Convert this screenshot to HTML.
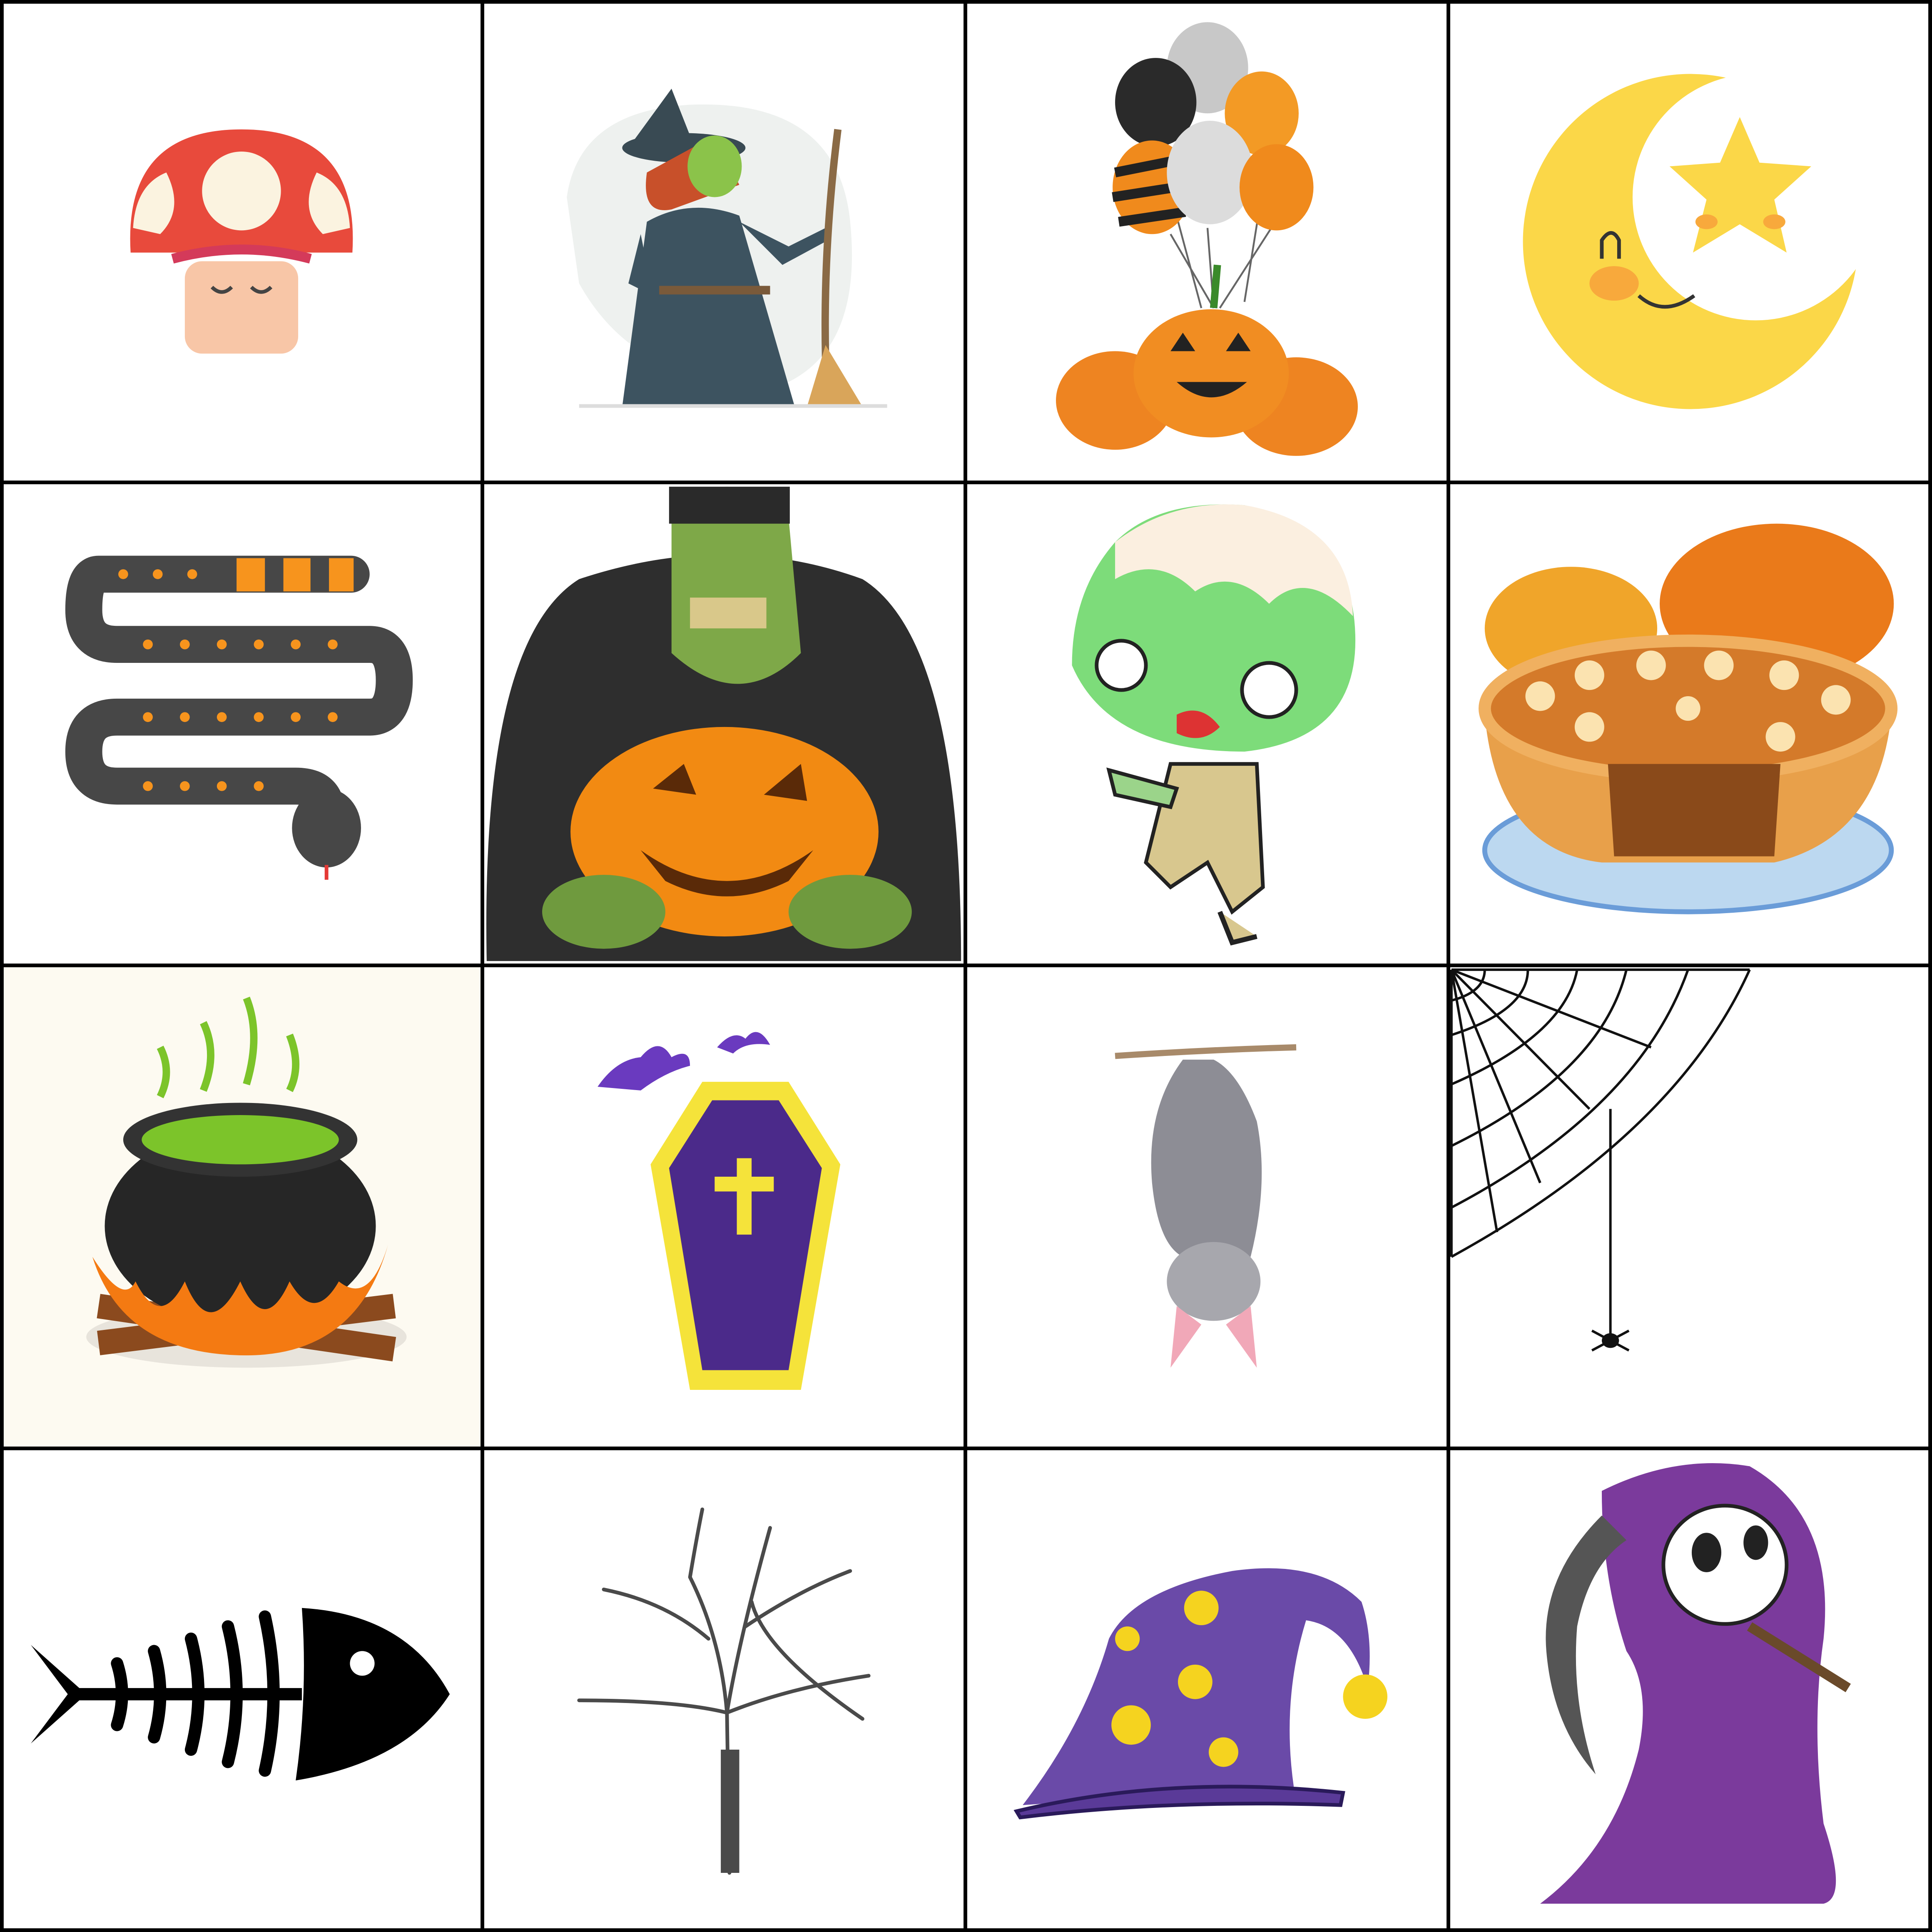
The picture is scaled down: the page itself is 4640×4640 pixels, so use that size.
<!DOCTYPE html>
<html><head><meta charset="utf-8"><style>
html,body{margin:0;padding:0;background:#fff}
svg{display:block;width:4640px;height:4640px}
</style></head><body>
<svg viewBox="0 0 1568 1568" xmlns="http://www.w3.org/2000/svg">
<rect width="1568" height="1568" fill="#fff"/>
<!-- cell 9 cream bg -->
<rect x="0" y="784" width="391" height="391" fill="#fdfaf1"/>

<!-- 1 mushroom -->
<path d="M106 205 Q100 105 196 105 Q292 105 286 205 Z" fill="#e84a3c"/>
<rect x="150" y="212" width="92" height="75" rx="14" fill="#f8c6a7"/>
<path d="M140 210 Q196 195 252 210" stroke="#d43a5a" stroke-width="8" fill="none"/>
<circle cx="196" cy="155" r="32" fill="#fbf3e0"/>
<path d="M108 185 Q110 150 135 140 Q150 170 130 190 Z" fill="#fbf3e0"/>
<path d="M284 185 Q282 150 257 140 Q242 170 262 190 Z" fill="#fbf3e0"/>
<path d="M172 233 q8 8 16 0 M204 233 q8 8 16 0" stroke="#444" stroke-width="3" fill="none"/>

<!-- 2 witch -->
<path d="M460 160 Q470 90 560 85 Q680 80 690 180 Q700 280 640 310 Q520 320 470 230 Z" fill="#eef1ef"/>
<path d="M510 120 L545 72 L560 110 Z" fill="#394a53"/>
<ellipse cx="555" cy="120" rx="50" ry="12" fill="#394a53"/>
<path d="M525 140 Q520 175 545 170 L600 150 L580 110 Z" fill="#c8502a"/>
<ellipse cx="580" cy="135" rx="22" ry="25" fill="#8bc34a"/>
<path d="M525 180 Q560 160 600 175 L645 330 L505 330 Z" fill="#3d5360"/>
<path d="M520 190 L510 230 L530 240 Z M600 180 L640 200 L670 185 L672 195 L635 215 Z" fill="#3d5360"/>
<rect x="535" y="232" width="90" height="7" fill="#7a5a3a"/>
<path d="M680 105 Q668 200 670 290" stroke="#8a6a45" stroke-width="6" fill="none"/>
<path d="M670 280 L655 330 L700 330 Z" fill="#d9a55a"/>
<rect x="470" y="328" width="250" height="3" fill="#ddd"/>

<!-- 3 balloons -->
<g stroke="#666" stroke-width="1.5" fill="none"><path d="M950 190 L985 250 M980 185 L985 250 M1035 180 L990 250 M1030 120 L1010 245 M940 120 L975 250"/></g>
<ellipse cx="980" cy="55" rx="33" ry="37" fill="#c8c8c8"/>
<ellipse cx="938" cy="83" rx="33" ry="36" fill="#2a2a2a"/>
<ellipse cx="1024" cy="92" rx="30" ry="34" fill="#f39a25"/>
<ellipse cx="935" cy="152" rx="32" ry="38" fill="#f08a1c"/>
<path d="M905 140 L965 128 M903 160 L967 150 M908 180 L962 172" stroke="#222" stroke-width="8"/>
<ellipse cx="982" cy="140" rx="35" ry="42" fill="#dcdcdc"/>
<ellipse cx="1036" cy="152" rx="30" ry="35" fill="#f08a1c"/>
<ellipse cx="905" cy="325" rx="48" ry="40" fill="#ee8421"/>
<ellipse cx="1052" cy="330" rx="50" ry="40" fill="#ee8421"/>
<ellipse cx="983" cy="303" rx="63" ry="52" fill="#f18d22"/>
<path d="M950 285 l10 -15 l10 15 Z M995 285 l10 -15 l10 15 Z M955 310 Q983 335 1012 310 Z" fill="#222"/>
<path d="M985 250 l3 -35" stroke="#3a8a2a" stroke-width="6"/>

<!-- 4 moon -->
<circle cx="1372" cy="196" r="136" fill="#fbd748"/>
<circle cx="1425" cy="160" r="100" fill="#fff"/>
<path d="M1412 95 L1428 132 L1470 135 L1440 162 L1450 205 L1412 182 L1374 205 L1385 162 L1355 135 L1396 132 Z" fill="#fbd748"/>
<ellipse cx="1310" cy="230" rx="20" ry="14" fill="#f8a93c"/>
<ellipse cx="1385" cy="180" rx="9" ry="6" fill="#f8a93c"/><ellipse cx="1440" cy="180" rx="9" ry="6" fill="#f8a93c"/>
<path d="M1300 210 v-15 q8 -12 14 0 v15 M1330 240 q20 18 45 0" stroke="#333" stroke-width="3" fill="none"/>

<!-- 5 snake -->
<path d="M285 466 H80 Q68 466 68 495 Q68 523 95 523 H300 Q320 523 320 552 Q320 582 300 582 H95 Q68 582 68 610 Q68 638 95 638 H240 Q265 638 265 660" stroke="#474747" stroke-width="30" fill="none" stroke-linecap="round"/>
<rect x="192" y="453" width="95" height="27" fill="#f7941d"/>
<rect x="215" y="453" width="15" height="27" fill="#474747"/><rect x="252" y="453" width="15" height="27" fill="#474747"/>
<ellipse cx="265" cy="672" rx="28" ry="32" fill="#474747"/>
<path d="M265 702 v12" stroke="#e53935" stroke-width="3"/>
<g fill="#f7941d">
<circle cx="100" cy="466" r="4"/><circle cx="128" cy="466" r="4"/><circle cx="156" cy="466" r="4"/>
<circle cx="120" cy="523" r="4"/><circle cx="150" cy="523" r="4"/><circle cx="180" cy="523" r="4"/><circle cx="210" cy="523" r="4"/><circle cx="240" cy="523" r="4"/><circle cx="270" cy="523" r="4"/>
<circle cx="120" cy="582" r="4"/><circle cx="150" cy="582" r="4"/><circle cx="180" cy="582" r="4"/><circle cx="210" cy="582" r="4"/><circle cx="240" cy="582" r="4"/><circle cx="270" cy="582" r="4"/>
<circle cx="120" cy="638" r="4"/><circle cx="150" cy="638" r="4"/><circle cx="180" cy="638" r="4"/><circle cx="210" cy="638" r="4"/>
</g>

<!-- 6 frankenstein -->
<path d="M395 780 Q390 520 470 470 Q590 430 700 470 Q780 520 780 780 Z" fill="#2e2e2e"/>
<path d="M545 420 Q545 395 590 395 Q640 395 640 420 L650 530 Q600 580 545 530 Z" fill="#7ea848"/>
<rect x="543" y="395" width="98" height="30" fill="#2a2a2a"/>
<rect x="560" y="485" width="62" height="25" fill="#d9c88a"/>
<ellipse cx="588" cy="675" rx="125" ry="85" fill="#f28a12"/>
<path d="M530 640 l25 -20 l10 25 Z M620 645 l30 -25 l5 30 Z M520 690 Q590 740 660 690 L640 715 Q590 740 540 715 Z" fill="#5a2a08"/>
<ellipse cx="490" cy="740" rx="50" ry="30" fill="#6f9a3e"/>
<ellipse cx="690" cy="740" rx="50" ry="30" fill="#6f9a3e"/>

<!-- 7 zombie -->
<path d="M905 440 Q940 405 1010 410 Q1100 430 1100 520 Q1100 600 1010 610 Q900 610 870 540 Q870 480 905 440 Z" fill="#7ddc7a"/>
<path d="M905 440 Q950 405 1010 410 Q1095 425 1098 500 Q1060 460 1030 490 Q1000 460 970 480 Q940 450 905 470 Z" fill="#fbefe0"/>
<circle cx="910" cy="540" r="20" fill="#fff" stroke="#222" stroke-width="3"/>
<circle cx="1030" cy="560" r="22" fill="#fff" stroke="#222" stroke-width="3"/>
<path d="M955 580 Q975 570 990 590 Q975 605 955 595 Z" fill="#d33"/>
<path d="M950 620 L1020 620 L1025 720 L1000 740 L980 700 L950 720 L930 700 Z" fill="#d8c78e" stroke="#222" stroke-width="3"/>
<path d="M900 625 L955 640 L950 655 L905 645 Z" fill="#9bd48a" stroke="#222" stroke-width="3"/>
<path d="M990 740 L1000 765 L1020 760" stroke="#222" stroke-width="4" fill="#d8c78e"/>

<!-- 8 pie -->
<ellipse cx="1442" cy="490" rx="95" ry="65" fill="#ea7a1a"/>
<ellipse cx="1275" cy="510" rx="70" ry="50" fill="#f0a52a"/>
<ellipse cx="1370" cy="690" rx="165" ry="50" fill="#bcd8f0" stroke="#6a9cd8" stroke-width="4"/>
<path d="M1205 580 Q1215 690 1300 700 L1440 700 Q1525 680 1535 580 Z" fill="#e8a04a"/>
<ellipse cx="1370" cy="575" rx="165" ry="55" fill="#d47a2a" stroke="#f0b060" stroke-width="10"/>
<path d="M1305 620 L1445 620 L1440 695 L1310 695 Z" fill="#8a4a1a"/>
<g fill="#fbe3b0"><circle cx="1250" cy="565" r="12"/><circle cx="1290" cy="548" r="12"/><circle cx="1340" cy="540" r="12"/><circle cx="1395" cy="540" r="12"/><circle cx="1448" cy="548" r="12"/><circle cx="1490" cy="568" r="12"/><circle cx="1290" cy="590" r="12"/><circle cx="1445" cy="598" r="12"/><circle cx="1370" cy="575" r="10"/></g>

<!-- 9 cauldron -->
<ellipse cx="200" cy="1085" rx="130" ry="25" fill="#e8e4dc"/>
<path d="M80 1090 L320 1060 M80 1060 L320 1095" stroke="#8b4a1e" stroke-width="20"/>
<ellipse cx="195" cy="995" rx="110" ry="80" fill="#262626"/>
<ellipse cx="195" cy="925" rx="95" ry="30" fill="#333"/>
<ellipse cx="195" cy="925" rx="80" ry="20" fill="#7cc42a"/>
<path d="M75 1020 Q100 1060 110 1040 Q130 1080 150 1040 Q170 1090 195 1040 Q215 1085 235 1040 Q255 1075 275 1040 Q300 1060 315 1010 Q290 1100 200 1100 Q100 1100 75 1020 Z" fill="#f47a12"/>
<path d="M130 850 q10 20 0 40 M165 830 q12 25 0 55 M200 810 q12 30 0 70 M235 840 q10 25 0 45" stroke="#7cc42a" stroke-width="6" fill="none"/>

<!-- 10 coffin -->
<path d="M570 878 L640 878 L682 945 L650 1128 L560 1128 L528 945 Z" fill="#f5e33a"/>
<path d="M578 893 L632 893 L667 948 L640 1112 L570 1112 L543 948 Z" fill="#4b2a8a"/>
<path d="M598 940 h12 v15 h18 v12 h-18 v35 h-12 v-35 h-18 v-12 h18 Z" fill="#f5e33a"/>
<path d="M485 882 Q500 860 520 858 Q535 840 545 858 Q560 850 560 865 Q540 870 520 885 Z" fill="#6a3abf"/>
<path d="M582 850 Q595 835 605 843 Q615 830 625 848 Q605 845 595 855 Z" fill="#6a3abf"/>

<!-- 11 bat -->
<path d="M905 857 Q980 852 1052 850" stroke="#a88a6a" stroke-width="5"/>
<path d="M960 860 Q930 900 935 960 Q940 1010 960 1020 L1015 1020 Q1030 960 1020 910 Q1005 870 985 860 Z" fill="#8d8d95"/>
<ellipse cx="985" cy="1040" rx="38" ry="32" fill="#a7a7ad"/>
<path d="M955 1060 L950 1110 L975 1075 Z M1015 1060 L1020 1110 L995 1075 Z" fill="#f1a8b8"/>

<!-- 12 spiderweb -->
<g stroke="#111" stroke-width="2" fill="none">
<path d="M1178 787 L1420 787 M1178 787 L1340 850 M1178 787 L1290 900 M1178 787 L1250 960 M1178 787 L1215 1000 M1178 787 L1178 1020"/>
<path d="M1205 787 Q1205 805 1178 812 M1240 787 Q1240 820 1178 840 M1280 787 Q1270 840 1178 880 M1320 787 Q1300 870 1178 930 M1370 787 Q1330 900 1178 980 M1420 787 Q1360 920 1178 1020"/>
<path d="M1307 900 L1307 1085"/>
</g>
<ellipse cx="1307" cy="1088" rx="7" ry="6" fill="#111"/>
<path d="M1292 1080 l30 16 M1292 1096 l30 -16" stroke="#111" stroke-width="2"/>

<!-- 13 fish -->
<path d="M245 1305 Q330 1310 365 1375 Q330 1430 240 1445 Q250 1375 245 1305 Z" fill="#000"/>
<circle cx="294" cy="1350" r="10" fill="#fff"/>
<path d="M25 1335 L70 1375 L25 1415 L55 1375 Z" fill="#000"/>
<path d="M60 1375 H245" stroke="#000" stroke-width="10"/>
<g stroke="#000" stroke-width="10" fill="none" stroke-linecap="round">
<path d="M95 1350 q8 25 0 50 M125 1340 q10 35 0 70 M155 1330 q12 45 0 90 M185 1320 q14 55 0 110 M215 1312 q14 63 0 125"/></g>

<!-- 14 tree -->
<g stroke="#4a4a4a" stroke-width="3" fill="none" stroke-linecap="round">
<path d="M592 1520 L590 1390 Q585 1330 560 1280 M590 1390 Q600 1330 625 1240 M590 1390 Q550 1380 470 1380 M590 1390 Q640 1370 705 1360 M575 1330 Q540 1300 490 1290 M605 1320 Q650 1290 690 1275 M560 1280 Q565 1250 570 1225 M610 1300 Q620 1340 700 1395"/></g>
<path d="M585 1420 L600 1420 L600 1520 L585 1520 Z" fill="#4a4a4a"/>

<!-- 15 wizard hat -->
<path d="M830 1465 Q880 1400 900 1330 Q920 1290 1000 1275 Q1070 1265 1105 1300 Q1115 1330 1110 1370 Q1095 1320 1060 1315 Q1040 1380 1050 1450 Z" fill="#6a4aa8"/>
<path d="M825 1470 Q950 1440 1090 1455 L1088 1465 Q950 1460 828 1475 Z" fill="#5a3a98" stroke="#2a1a5a" stroke-width="3"/>
<g fill="#f5d31f"><circle cx="975" cy="1305" r="14"/><circle cx="918" cy="1400" r="16"/><circle cx="970" cy="1365" r="14"/><circle cx="993" cy="1422" r="12"/><circle cx="915" cy="1330" r="10"/><circle cx="1108" cy="1377" r="18"/></g>

<!-- 16 reaper -->
<path d="M1300 1210 Q1360 1180 1420 1190 Q1490 1230 1480 1330 Q1470 1400 1480 1480 Q1500 1540 1480 1545 L1250 1545 Q1310 1500 1330 1420 Q1340 1370 1320 1340 Q1300 1280 1300 1210 Z" fill="#7b3a9c"/>
<ellipse cx="1400" cy="1270" rx="50" ry="48" fill="#fff" stroke="#222" stroke-width="3"/>
<ellipse cx="1385" cy="1260" rx="12" ry="16" fill="#222"/><ellipse cx="1425" cy="1252" rx="10" ry="14" fill="#222"/>
<path d="M1300 1230 Q1250 1280 1255 1340 Q1260 1400 1295 1440 Q1275 1380 1280 1320 Q1290 1270 1320 1250 Z" fill="#555"/>
<path d="M1420 1320 L1500 1370" stroke="#6a4a2a" stroke-width="8"/>
</g>

<!-- grid lines -->
<g stroke="#000" stroke-width="3">
<path d="M0 1.5 H1568 M0 391.5 H1568 M0 783.5 H1568 M0 1175.5 H1568 M0 1566.5 H1568"/>
<path d="M1.5 0 V1568 M391.5 0 V1568 M783.5 0 V1568 M1175.5 0 V1568 M1566.5 0 V1568"/>
</g>
</svg>
</body></html>
